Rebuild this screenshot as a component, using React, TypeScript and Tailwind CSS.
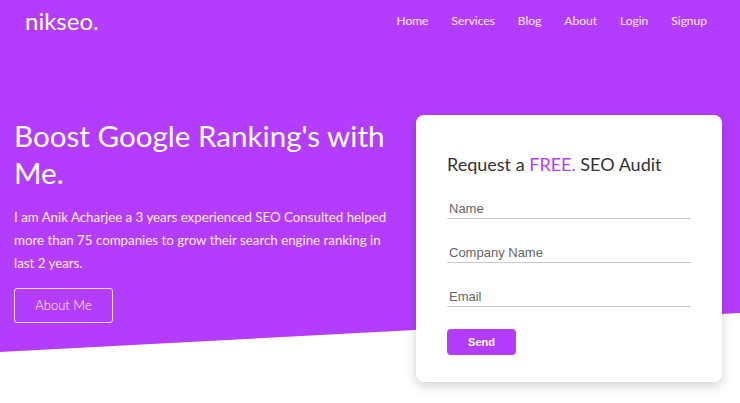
import React from "react";

const links = ["Home", "Services", "Blog", "About", "Login", "Signup"];

const App: React.FC = () => {
  return (
    <div className="relative min-h-[403px] w-full overflow-hidden bg-white font-['Lato','Liberation_Sans',sans-serif]">
      {/* purple slanted backdrop */}
      <div className="absolute inset-x-0 top-0 h-[352px] bg-[#b43dfd] [clip-path:polygon(0_0,100%_0,100%_313px,0_352px)]" />

      <div className="relative">
        <nav className="flex items-center justify-between pl-[25px] pr-[33px] pt-[6px]">
          <a className="text-[24px] leading-[30px] text-white">nikseo.</a>
          <ul className="flex gap-[23px] text-[12px] text-white/90">
            {links.map((l) => (
              <li key={l}>{l}</li>
            ))}
          </ul>
        </nav>

        <div className="flex items-start justify-between pl-[14px] pr-[18px] pt-[79px]">
          <div className="w-[385px] pt-[2px]">
            <h1 className="text-[29.6px] leading-[37px] text-white">
              Boost Google Ranking's with Me.
            </h1>
            <p className="mt-[15px] text-[13.3px] leading-[23px] text-white/90">
              I am Anik Acharjee a 3 years experienced SEO Consulted helped more than 75 companies to grow their search engine ranking in last 2 years.
            </p>
            <button className="mt-[13px] h-[35px] w-[99px] rounded-[3px] border border-white/80 text-[13px] font-light text-white">
              About Me
            </button>
          </div>

          <div className="w-[306px] rounded-lg bg-white pl-[31px] pr-[31px] pt-[37px] pb-[27px] shadow-[0_4px_12px_rgba(0,0,0,0.18)]">
            <h2 className="text-[18px] leading-[24px] text-[#333]">
              Request a <span className="text-[#b43dfd]">FREE.</span> SEO Audit
            </h2>
            <form className="mt-[17px] flex flex-col gap-[18px] font-['Liberation_Sans',Arial,sans-serif]">
              {["Name", "Company Name", "Email"].map((p) => (
                <input
                  key={p}
                  placeholder={p}
                  className="h-[26px] w-full border-b border-[#c7ccd4] px-[2px] pt-[5px] text-[13px] outline-none placeholder:text-[#666]"
                />
              ))}
              <button
                type="button"
                className="mt-[4px] h-[26px] w-[69px] rounded-[4px] bg-[#b43dfd] text-[11px] font-bold text-white"
              >
                Send
              </button>
            </form>
          </div>
        </div>
      </div>
    </div>
  );
};

export default App;
